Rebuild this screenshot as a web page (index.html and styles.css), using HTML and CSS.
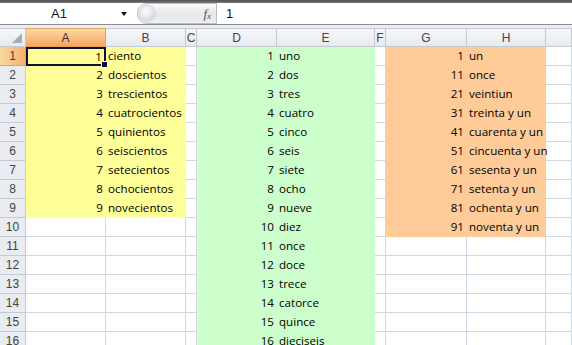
FILE: index.html
```html
<!DOCTYPE html>
<html lang="en">
<head>
    <meta charset="UTF-8">
    <title>Libro1</title>
    <link rel="stylesheet" href="styles.css">
</head>
<body>
    <div class="topstrip"></div>
    <div class="formula_bar">
        <div class="name_box">A1</div>
        <div class="name_arrow"></div>
        <div class="fx_button">
            <span class="fx_knob"></span>
            <span class="fx">f<sub>x</sub></span>
        </div>
        <div class="formula">1</div>
    </div>
    <div class="sheet" id="sheet"></div>
    <script>
        const sheet = document.getElementById('sheet');
        const cols = ['A', 'B', 'C', 'D', 'E', 'F', 'G', 'H', ''];
        const hundreds = ['ciento', 'doscientos', 'trescientos', 'cuatrocientos', 'quinientos',
            'seiscientos', 'setecientos', 'ochocientos', 'novecientos'];
        const units = ['uno', 'dos', 'tres', 'cuatro', 'cinco', 'seis', 'siete', 'ocho', 'nueve',
            'diez', 'once', 'doce', 'trece', 'catorce', 'quince', 'dieciseis'];
        const tens = ['un', 'once', 'veintiun', 'treinta y un', 'cuarenta y un', 'cincuenta y un',
            'sesenta y un', 'setenta y un', 'ochenta y un', 'noventa y un'];

        function cell(cls, text) {
            const d = document.createElement('div');
            d.className = cls;
            if (text !== undefined) d.textContent = text;
            sheet.appendChild(d);
            return d;
        }

        // header row
        cell('corner');
        cols.forEach(c => cell('col_head' + (c == 'A' ? ' active' : ''), c));

        for (let r = 1; r <= 16; r++) {
            cell('row_head' + (r == 1 ? ' active' : ''), r);
            // A, B
            if (r <= 9) {
                const a = cell('c num yellow', r);
                if (r == 1) a.classList.add('selected');
                cell('c txt yellow', hundreds[r - 1]);
            } else {
                cell('c');
                cell('c');
            }
            cell('c');
            // D, E
            cell('c num green', r);
            cell('c txt green', units[r - 1]);
            cell('c');
            // G, H
            if (r <= 10) {
                cell('c num orange', (r - 1) * 10 + 1);
                cell('c txt orange', tens[r - 1]);
            } else {
                cell('c');
                cell('c');
            }
            cell('c');
        }
    </script>
</body>
</html>
```

FILE: styles.css
```css
body {
    margin: 0;
    overflow: hidden;
    background-color: #fff;
    font-family: "Liberation Sans", Arial, sans-serif;
}
.topstrip {
    height: 3px;
    background: linear-gradient(#4e4e4e, #7a7a7a);
}
.formula_bar {
    display: flex;
    align-items: center;
    height: 21px;
    background-color: #fff;
    border-bottom: 1px solid #8c8c8c;
}
.name_box {
    width: 118px;
    text-align: center;
    font-size: 13px;
    color: #111;
}
.name_arrow {
    width: 0;
    height: 0;
    border-left: 3.5px solid transparent;
    border-right: 3.5px solid transparent;
    border-top: 4px solid #111;
    margin-left: 3px;
    margin-top: 1px;
}
.fx_button {
    position: relative;
    display: flex;
    align-items: center;
    justify-content: flex-end;
    width: 78px;
    height: 19px;
    margin-left: 10px;
    border: 1px solid #b9bec6;
    border-radius: 10px 0 0 10px;
    background: linear-gradient(#fafafa, #e4e7eb 55%, #eef0f2);
}
.fx_knob {
    position: absolute;
    left: 2px;
    top: 2px;
    width: 15px;
    height: 15px;
    border-radius: 50%;
    background: radial-gradient(circle at 40% 35%, #fff, #e6e8ec 45%, #c2c7ce);
    box-shadow: 0 0 0 1px #d2d6dc;
}
.fx {
    font-family: "Liberation Serif", serif;
    font-style: italic;
    font-size: 13px;
    color: #555;
    margin-right: 5px;
}
.fx sub {
    font-size: 9px;
    vertical-align: -1px;
}
.formula {
    margin-left: 9px;
    font-size: 13px;
    color: #111;
}
.sheet {
    display: grid;
    grid-template-columns: 26px 80px 80px 11px 80px 98px 11px 81px 79px 1fr;
    grid-auto-rows: 19px;
    border-top: 3px solid #eceef1;
}
.sheet > div {
    box-sizing: border-box;
    white-space: nowrap;
}
.corner,
.col_head,
.row_head {
    display: flex;
    align-items: center;
    justify-content: center;
    font-size: 12px;
    color: #444;
    background: linear-gradient(#f7f8fa, #e6e9ee);
    border-right: 1px solid #c5cad2;
    border-bottom: 1px solid #c5cad2;
}
.corner {
    position: relative;
    border-top: 1px solid #c5cad2;
}
.corner::after {
    content: "";
    position: absolute;
    right: 3px;
    bottom: 3px;
    border-left: 10px solid transparent;
    border-bottom: 10px solid #a9adb3;
}
.col_head {
    border-top: 1px solid #c5cad2;
}
.row_head {
    background: #e9ecf0;
}
.col_head.active {
    background: linear-gradient(#fbd9a3, #f6a65d);
    border-color: #e4a35c;
    color: #333;
}
.row_head.active {
    background: linear-gradient(90deg, #fbd9a3, #f6b26f);
    border-color: #e4a35c;
}
.c {
    font-family: "Open Sans", sans-serif;
    font-size: 11.6px;
    line-height: 18px;
    color: #000;
    border-right: 1px solid #d0d7e5;
    border-bottom: 1px solid #d0d7e5;
}
.num {
    text-align: right;
    padding-right: 2px;
}
.txt {
    padding-left: 2px;
}
.yellow {
    background-color: #ffff99;
    border-color: #ffff99;
}
.green {
    background-color: #ccffcc;
    border-color: #ccffcc;
}
.orange {
    background-color: #ffcc99;
    border-color: #ffcc99;
}
.selected {
    position: relative;
    border: 2px solid #111133;
    line-height: 15px;
}
.selected::after {
    content: "";
    position: absolute;
    right: -4px;
    bottom: -4px;
    width: 5px;
    height: 5px;
    background-color: #111133;
    border: 1px solid #fff;
}
```
